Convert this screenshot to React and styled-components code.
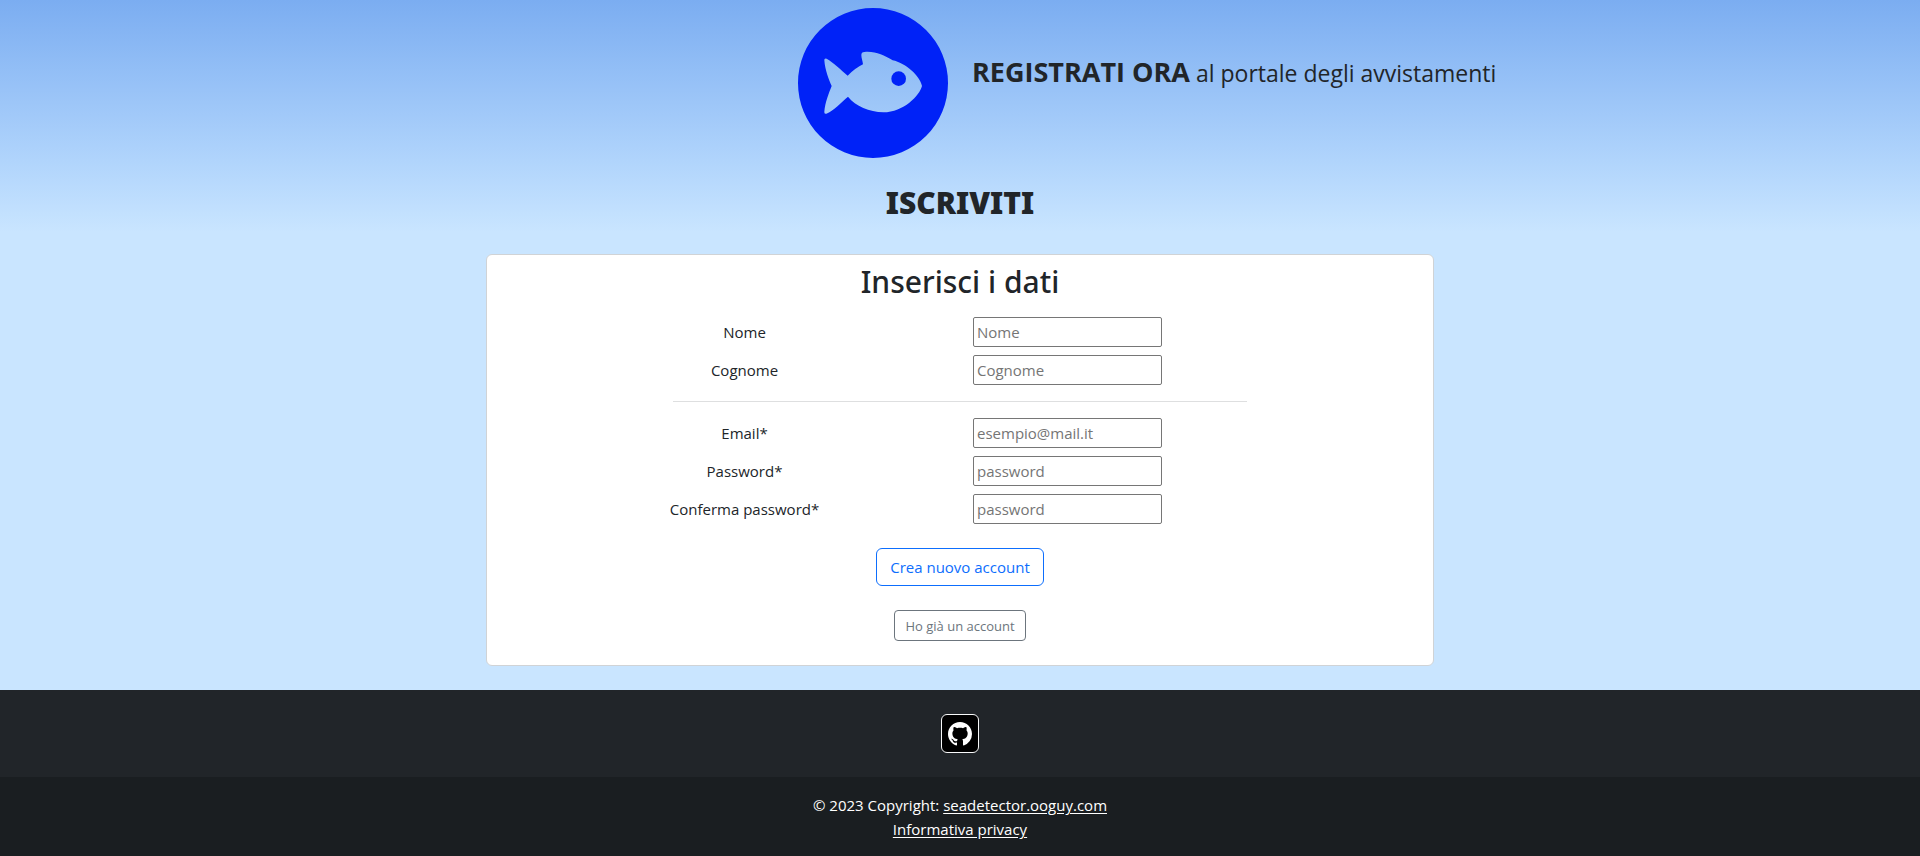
import React from 'react';
import styled, { createGlobalStyle } from 'styled-components';

const GlobalStyle = createGlobalStyle`
  *, *::before, *::after { box-sizing: border-box; }
  body {
    margin: 0;
    font-family: 'Segoe UI', 'Open Sans', 'Noto Sans', sans-serif;
    font-size: 15px;
    line-height: 24px;
    color: #212529;
    background: #c9e5ff;
  }
`;

const Page = styled.div`
  display: flex;
  flex-direction: column;
  min-height: 100vh;
  background: linear-gradient(#7badf1 0, #b0d4fc 160px, #c9e5ff 232px);
`;

const Header = styled.header`
  display: grid;
  grid-template-columns: 1fr 1fr;
  column-gap: 24px;
  padding-top: 8px;
`;

const Logo = styled.svg`
  width: 150px;
  height: 150px;
`;

const LogoCell = styled.div`
  display: flex;
  justify-content: flex-end;
`;

const Tagline = styled.p`
  margin: 44px 0 0;
  font-size: 23px;
  line-height: 40px;
  font-weight: 400;
  white-space: nowrap;
`;

const Strong = styled.strong`
  font-size: 27px;
  font-weight: 700;
`;

const Title = styled.h1`
  margin: 24px 0 30px;
  font-family: 'Segoe UI', 'Noto Sans', sans-serif;
  font-size: 30px;
  line-height: 42px;
  font-weight: 900;
  text-align: center;
`;

const Card = styled.main`
  display: flex;
  flex-direction: column;
  align-items: center;
  width: 100%;
  max-width: 948px;
  margin: 0 auto 24px;
  padding: 8px 0 24px;
  background: #fff;
  border: 1px solid #d0d3d6;
  border-radius: 6px;
`;

const CardTitle = styled.h2`
  margin: 0 0 16px;
  font-family: 'Segoe UI', 'Noto Sans', sans-serif;
  font-size: 30px;
  line-height: 38px;
  font-weight: 500;
`;

const Form = styled.form`
  display: flex;
  flex-direction: column;
  align-items: center;
  gap: 24px;
  width: 100%;
  padding: 0 42px;
`;

const Fields = styled.div`
  display: flex;
  flex-direction: column;
  gap: 8px;
  width: 100%;
`;

const Row = styled.div`
  display: grid;
  grid-template-columns: 1fr 1fr;
  align-items: center;
`;

const Label = styled.label`
  padding: 0 12px;
  text-align: center;
`;

const Input = styled.input`
  width: 189px;
  height: 30px;
  margin-left: 13px;
  padding: 1px 3px;
  border: 1px solid #767676;
  border-radius: 2px;
  background: #fff;
  font: inherit;
  color: inherit;
  &::placeholder { color: #757575; opacity: 1; }
`;

const Divider = styled.hr`
  width: 100%;
  max-width: 574px;
  margin: 8px auto;
  border: 0;
  border-top: 1px solid #dedfe0;
`;

const Button = styled.button`
  height: ${(p) => (p.$small ? '31px' : '38px')};
  padding: ${(p) => (p.$small ? '0 10px' : '0 13px')};
  border: 1px solid ${(p) => (p.$small ? '#6c757d' : '#0d6efd')};
  border-radius: ${(p) => (p.$small ? '4px' : '6px')};
  background: transparent;
  color: ${(p) => (p.$small ? '#6c757d' : '#0d6efd')};
  font-family: inherit;
  font-size: ${(p) => (p.$small ? '13px' : '15px')};
  line-height: 24px;
  cursor: pointer;
`;

const Footer = styled.footer`
  display: flex;
  flex-direction: column;
  flex: 1;
  background: #212529;
  color: #fff;
`;

const Social = styled.div`
  display: flex;
  justify-content: center;
  padding: 24px;
`;

const SocialLink = styled.a`
  display: flex;
  align-items: center;
  justify-content: center;
  width: 38px;
  height: 39px;
  border: 1px solid #f8f9fa;
  border-radius: 6px;
  background: #000;
  color: #fff;
`;

const Legal = styled.div`
  flex: 1;
  padding: 16px;
  background: #1a1e21;
  text-align: center;
`;

const Line = styled.p`
  margin: 0;
`;

const Link = styled.a`
  color: #fff;
  text-underline-offset: 2px;
`;

function Field({ id, label, type = 'text', placeholder }) {
  return (
    <Row>
      <Label htmlFor={id}>{label}</Label>
      <Input id={id} name={id} type={type} placeholder={placeholder} />
    </Row>
  );
}

export default function App() {
  return (
    <>
      <GlobalStyle />
      <Page>
        <Header>
          <LogoCell>
            <Logo viewBox="54 24 450 450" role="img" aria-label="Sea Detector">
              <path
                fill="#0022f7"
                fillRule="evenodd"
                d="M54 249a225 225 0 1 0 450 0a225 225 0 1 0 -450 0Z
                   M133 181Q132 174 140 176C160 187 183 210 203 227Q226 204 249 193C248 182 244 174 244 165Q244 156 253 156C286 153 311 165 338 181C376 189 420 227 426 258C419 286 371 337 310 337C268 335 227 319 204 290C183 307 160 333 139 341Q132 343 133 335C135 308 147 278 155 258C147 239 135 211 133 181Z"
              />
              <circle cx="356" cy="236" r="22" fill="#0022f7" />
            </Logo>
          </LogoCell>
          <Tagline>
            <Strong>REGISTRATI ORA</Strong> al portale degli avvistamenti
          </Tagline>
        </Header>
        <Title>ISCRIVITI</Title>
        <Card>
          <CardTitle>Inserisci i dati</CardTitle>
          <Form onSubmit={(e) => e.preventDefault()}>
            <Fields>
              <Field id="nome" label="Nome" placeholder="Nome" />
              <Field id="cognome" label="Cognome" placeholder="Cognome" />
              <Divider />
              <Field id="email" label="Email*" type="email" placeholder="esempio@mail.it" />
              <Field id="password" label="Password*" type="password" placeholder="password" />
              <Field id="conferma" label="Conferma password*" type="password" placeholder="password" />
            </Fields>
            <Button type="submit">Crea nuovo account</Button>
            <Button type="button" $small>Ho già un account</Button>
          </Form>
        </Card>
        <Footer>
          <Social>
            <SocialLink href="#github" aria-label="GitHub">
              <svg width="24" height="24" viewBox="0 0 16 16" fill="currentColor" aria-hidden="true">
                <path d="M8 0C3.58 0 0 3.58 0 8c0 3.54 2.29 6.53 5.47 7.59.4.07.55-.17.55-.38 0-.19-.01-.82-.01-1.49-2.01.37-2.53-.49-2.69-.94-.09-.23-.48-.94-.82-1.13-.28-.15-.68-.52-.01-.53.63-.01 1.08.58 1.23.82.72 1.21 1.87.87 2.33.66.07-.52.28-.87.51-1.07-1.78-.2-3.64-.89-3.64-3.95 0-.87.31-1.59.82-2.15-.08-.2-.36-1.02.08-2.12 0 0 .67-.21 2.2.82.64-.18 1.32-.27 2-.27s1.36.09 2 .27c1.53-1.04 2.2-.82 2.2-.82.44 1.1.16 1.92.08 2.12.51.56.82 1.27.82 2.15 0 3.07-1.87 3.75-3.65 3.95.29.25.54.73.54 1.48 0 1.07-.01 1.93-.01 2.2 0 .21.15.46.55.38A8.01 8.01 0 0 0 16 8c0-4.42-3.58-8-8-8Z" />
              </svg>
            </SocialLink>
          </Social>
          <Legal>
            <Line>© 2023 Copyright: <Link href="#home">seadetector.ooguy.com</Link></Line>
            <Line><Link href="#privacy">Informativa privacy</Link></Line>
          </Legal>
        </Footer>
      </Page>
    </>
  );
}
